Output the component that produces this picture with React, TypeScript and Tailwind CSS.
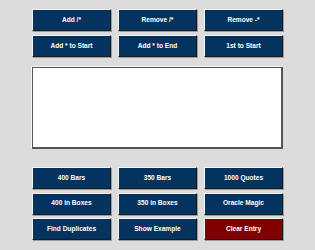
import React from "react";

const Btn = ({ label, red }: { label: string; red?: boolean }) => (
  <button
    className={`h-[22px] w-full border border-t-[#f4f4f4] border-l-[#f4f4f4] border-r-[#1a1a1a] border-b-[#1a1a1a] shadow-[1px_1px_0_#9a9a9a] text-white font-bold text-[6.6px] leading-none ${
      red ? "bg-[#800000]" : "bg-[#04335f]"
    }`}
    style={{ fontFamily: '"Liberation Sans", Arial, sans-serif' }}
  >
    {label}
  </button>
);

export default function App() {
  return (
    <div className="w-[315px] h-[250px] bg-[#dcdcdc] px-[32px] pt-[9px]">
      <div className="grid grid-cols-3 gap-x-[7px] gap-y-[4px]">
        <Btn label="Add /*" />
        <Btn label="Remove /*" />
        <Btn label="Remove -*" />
        <Btn label="Add * to Start" />
        <Btn label="Add * to End" />
        <Btn label="1st to Start" />
      </div>
      <textarea className="mt-[10px] block w-full h-[82px] bg-white border border-[#555] border-b-2 border-r-2 shadow-[-1px_-1px_0_#f4f4f4] resize-none outline-none" />
      <div className="mt-[18px] grid grid-cols-3 gap-x-[7px] gap-y-[3.5px]">
        <Btn label="400 Bars" />
        <Btn label="350 Bars" />
        <Btn label="1000 Quotes" />
        <Btn label="400 in Boxes" />
        <Btn label="350 in Boxes" />
        <Btn label="Oracle Magic" />
        <Btn label="Find Duplicates" />
        <Btn label="Show Example" />
        <Btn label="Clear Entry" red />
      </div>
    </div>
  );
}
